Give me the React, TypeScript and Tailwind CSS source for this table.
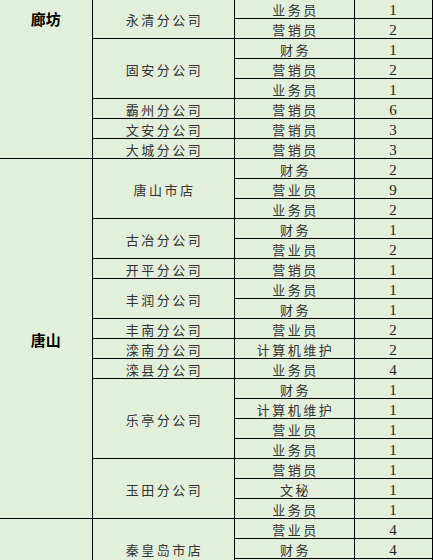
import React from "react";

type Row = {
  region?: { label: string; span: number; top?: boolean };
  company?: { name: string; span: number };
  role: string;
  count: string;
};

const rows: Row[] = [
  { region: { label: "廊坊", span: 8, top: true }, company: { name: "永清分公司", span: 2 }, role: "业务员", count: "1" },
  { role: "营销员", count: "2" },
  { company: { name: "固安分公司", span: 3 }, role: "财务", count: "1" },
  { role: "营销员", count: "2" },
  { role: "业务员", count: "1" },
  { company: { name: "霸州分公司", span: 1 }, role: "营销员", count: "6" },
  { company: { name: "文安分公司", span: 1 }, role: "营销员", count: "3" },
  { company: { name: "大城分公司", span: 1 }, role: "营销员", count: "3" },
  { region: { label: "唐山", span: 18 }, company: { name: "唐山市店", span: 3 }, role: "财务", count: "2" },
  { role: "营业员", count: "9" },
  { role: "业务员", count: "2" },
  { company: { name: "古冶分公司", span: 2 }, role: "财务", count: "1" },
  { role: "营业员", count: "2" },
  { company: { name: "开平分公司", span: 1 }, role: "营销员", count: "1" },
  { company: { name: "丰润分公司", span: 2 }, role: "业务员", count: "1" },
  { role: "财务", count: "1" },
  { company: { name: "丰南分公司", span: 1 }, role: "营业员", count: "2" },
  { company: { name: "滦南分公司", span: 1 }, role: "计算机维护", count: "2" },
  { company: { name: "滦县分公司", span: 1 }, role: "业务员", count: "4" },
  { company: { name: "乐亭分公司", span: 4 }, role: "财务", count: "1" },
  { role: "计算机维护", count: "1" },
  { role: "营业员", count: "1" },
  { role: "业务员", count: "1" },
  { company: { name: "玉田分公司", span: 3 }, role: "营销员", count: "1" },
  { role: "文秘", count: "1" },
  { role: "业务员", count: "1" },
  { region: { label: "", span: 3 }, company: { name: "秦皇岛市店", span: 3 }, role: "营业员", count: "4" },
  { role: "财务", count: "4" },
  // last row runs past the bottom edge, only its top line shows
  { role: "", count: "" },
];

const cjk = "font-['Noto_Sans_CJK_SC',sans-serif] text-[13px] tracking-[2.5px] text-[#333]";

export default function App() {
  return (
    <div className="h-[560px] w-[433px] overflow-hidden bg-[#e2efda]">
      <table className="-mt-[2px] w-[432px] table-fixed border-collapse">
        <colgroup>
          <col className="w-[92px]" />
          <col className="w-[142px]" />
          <col className="w-[120px]" />
          <col className="w-[78px]" />
        </colgroup>
        <tbody>
          {rows.map((r, i) => (
            <tr key={i} className="h-[20px]">
              {r.region && (
                <td
                  rowSpan={r.region.span}
                  className={`border border-l-0 border-black p-0 text-center font-['Noto_Sans_CJK_SC',sans-serif] text-[15px] font-bold leading-[20px] text-black ${
                    r.region.top ? "align-top pt-[10px]" : "align-middle pt-[2px]"
                  }`}
                >
                  {r.region.label}
                </td>
              )}
              {r.company && (
                <td
                  rowSpan={r.company.span}
                  className={`border border-black p-0 pt-[2px] pl-[3px] text-center align-middle leading-[16px] ${cjk}`}
                >
                  {r.company.name}
                </td>
              )}
              <td className={`border border-black p-0 pt-[2px] pl-[3px] text-center align-middle leading-[16px] ${cjk}`}>
                {r.role}
              </td>
              <td className="border border-black p-0 pt-[2px] text-center align-middle font-['Liberation_Serif',serif] text-[15px] leading-[16px] text-[#222]">
                {r.count}
              </td>
            </tr>
          ))}
        </tbody>
      </table>
    </div>
  );
}
